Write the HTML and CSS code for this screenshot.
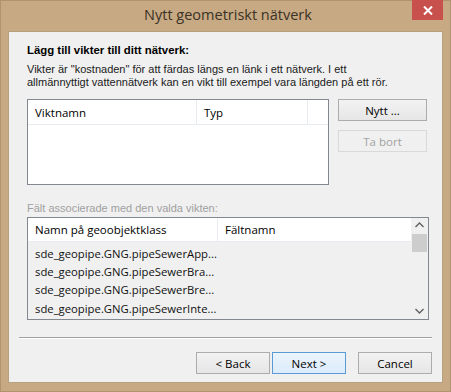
FILE: index.html
```html
<!DOCTYPE html>
<html lang="sv">
<head>
    <meta charset="UTF-8">
    <title>Nytt geometriskt nätverk</title>
    <link rel="stylesheet" href="styles.css">
</head>
<body>
    <div class="window">
        <div class="titlebar">
            <span></span>
            <span class="title">Nytt geometriskt nätverk</span>
            <button class="close">
                <svg width="10" height="9" viewBox="0 0 10 9">
                    <path d="M1 0.5 L9 8.5 M9 0.5 L1 8.5" stroke="#fff" stroke-width="2"/>
                </svg>
            </button>
        </div>

        <div class="content">
            <h4 class="heading">Lägg till vikter till ditt nätverk:</h4>
            <p class="desc">Vikter är "kostnaden" för att färdas längs en länk i ett nätverk. I ett<br>allmännyttigt vattennätverk kan en vikt till exempel vara längden på ett rör.</p>

            <div class="weights-row">
                <div class="list weights">
                    <div class="list-head">
                        <span class="col col-name">Viktnamn</span>
                        <span class="col col-type">Typ</span>
                        <span class="col col-rest"></span>
                    </div>
                </div>
                <div class="side-buttons">
                    <button class="btn side">Nytt ...</button>
                    <button class="btn side" disabled>Ta bort</button>
                </div>
            </div>

            <p class="label-disabled">Fält associerade med den valda vikten:</p>

            <div class="list fields">
                <div class="fields-main">
                    <div class="list-head">
                        <span class="col col-class">Namn på geoobjektklass</span>
                        <span class="col col-field">Fältnamn</span>
                    </div>
                    <div class="rows">
                        <div class="row">sde_geopipe.GNG.pipeSewerApp...</div>
                        <div class="row">sde_geopipe.GNG.pipeSewerBra...</div>
                        <div class="row">sde_geopipe.GNG.pipeSewerBre...</div>
                        <div class="row">sde_geopipe.GNG.pipeSewerInte...</div>
                    </div>
                </div>
                <div class="scrollbar">
                    <svg class="arrow" width="9" height="6" viewBox="0 0 9 6"><path d="M0.5 5 L4.5 1 L8.5 5" fill="none" stroke="#606060" stroke-width="1.4"/></svg>
                    <div class="thumb"></div>
                    <div class="track"></div>
                    <svg class="arrow" width="9" height="6" viewBox="0 0 9 6"><path d="M0.5 1 L4.5 5 L8.5 1" fill="none" stroke="#606060" stroke-width="1.4"/></svg>
                </div>
            </div>

            <div class="separator"></div>

            <div class="footer">
                <button class="btn">&lt; Back</button>
                <button class="btn default">Next &gt;</button>
                <button class="btn cancel">Cancel</button>
            </div>
        </div>
    </div>
</body>
</html>
```

FILE: styles.css
```css
body {
    margin: 0;
    font-family: "Liberation Sans", Arial, sans-serif;
    font-size: 11px;
    color: #000;
}
.window {
    width: 451px;
    height: 392px;
    box-sizing: border-box;
    background-color: #c7a983;
    border: 1px solid #b09470;
    padding: 0 7px 8px 7px;
    display: flex;
    flex-direction: column;
}
.titlebar {
    height: 30px;
    display: grid;
    grid-template-columns: 1fr auto 1fr;
    align-items: start;
}
.title {
    font-family: "Open Sans", sans-serif;
    font-size: 14.5px;
    color: #3a3226;
    padding-top: 4px;
    margin-left: 5px;
}
.close {
    justify-self: end;
    width: 31px;
    height: 20px;
    margin-top: -1px;
    border: none;
    padding: 0;
    background-color: #c8504d;
    display: flex;
    align-items: center;
    justify-content: center;
}
.content {
    flex: 1;
    background-color: #f0f0f0;
    border: 1px solid #b7a07e;
    padding: 12px 10px 0 18px;
    display: flex;
    flex-direction: column;
}
.heading {
    margin: 0;
    font-size: 11.4px;
    line-height: 13px;
    font-weight: bold;
}
.desc {
    margin: 6px 0 0 0;
    line-height: 13px;
    color: #1a1a1a;
}
.weights-row {
    margin-top: 10px;
    display: flex;
    gap: 9px;
}
.list {
    background: #fff;
    border: 1px solid #828790;
    font-family: "Open Sans", sans-serif;
    font-size: 11.5px;
}
.weights {
    width: 300px;
    height: 84px;
}
.list-head {
    display: flex;
    background: #fff;
    border-bottom: 1px solid #e8ebef;
    height: 24px;
    align-items: stretch;
}
.col {
    flex: none;
    display: flex;
    align-items: center;
    padding-left: 7px;
    border-right: 1px solid #e8ebef;
    box-sizing: border-box;
}
.col-name { width: 169px; }
.col-type { width: 111px; }
.col-rest { flex: 1; border-right: none; }
.side-buttons {
    display: flex;
    flex-direction: column;
    gap: 9px;
}
.btn {
    font-family: "Open Sans", sans-serif;
    font-size: 11.5px;
    color: #000;
    border: 1px solid #acacac;
    background: linear-gradient(#f2f2f2, #e6e6e6);
    padding: 0;
    height: 22px;
    width: 74px;
}
.btn.side {
    width: 89px;
}
.btn:disabled {
    color: #a2a2a2;
    border-color: #d9d9d9;
    background: #f0f0f0;
}
.label-disabled {
    margin: 17px 0 0 0;
    line-height: 13px;
    color: #a0a0a0;
}
.fields {
    margin-top: 2px;
    width: 400px;
    height: 101px;
    display: flex;
    background: #f0f0f0;
}
.fields-main {
    flex: 1;
    min-width: 0;
}
.fields .list-head {
    height: 23px;
}
.col-class { width: 190px; }
.col-field { flex: 1; border-right: none; }
.rows {
    padding-top: 2px;
}
.row {
    height: 18.3px;
    display: flex;
    align-items: center;
    padding-left: 7px;
    font-size: 11.3px;
    color: #111;
}
.scrollbar {
    width: 17px;
    flex: none;
    display: flex;
    flex-direction: column;
    align-items: center;
    background: #f0f0f0;
}
.arrow {
    margin: 4px 0 5px 0;
}
.thumb {
    width: 15px;
    height: 18px;
    background: #cdcdcd;
    margin-top: 1px;
}
.track {
    flex: 1;
}
.separator {
    margin: 17px 0 0 -8px;
    border-top: 1px solid #a0a0a0;
    border-bottom: 1px solid #fff;
}
.footer {
    margin-top: 13px;
    display: flex;
    justify-content: flex-end;
    gap: 2px;
}
.btn.default {
    background: linear-gradient(#eaf4fc, #dcecfc);
    border-color: #5c9ad6;
}
.btn.cancel {
    margin-left: 10px;
}
```
